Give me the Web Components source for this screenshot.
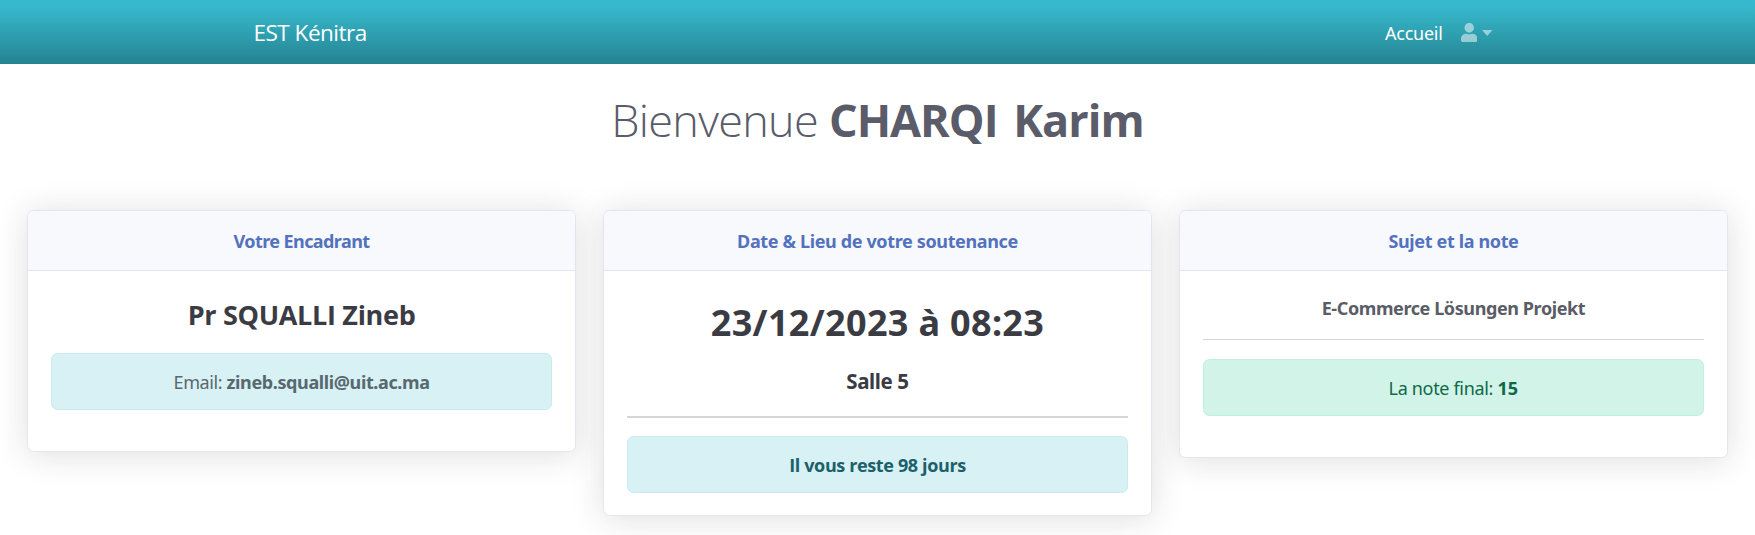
<!DOCTYPE html>
<html lang="fr">
<head>
<meta charset="utf-8">
<title>EST Kénitra</title>
<style>
html{height:100%}
body{margin:0;min-height:100%;background:#fff;font-family:"Open Sans","Noto Sans",sans-serif;font-size:18px;color:#5a5c69}
</style>
</head>
<body>
<student-home></student-home>
<script>
const define = (name, html) => {
  const t = document.createElement('template');
  t.innerHTML = html;
  customElements.define(name, class extends HTMLElement {
    constructor() {
      super();
      this.attachShadow({mode: 'open'}).append(t.content.cloneNode(true));
    }
  });
};

define('user-menu', `
<style>
:host{display:flex;align-items:center;color:rgba(255,255,255,.5)}
.user{width:16.5px;height:19px;margin-right:5px;fill:currentColor}
.caret{width:10.5px;height:6px;fill:currentColor}
</style>
<svg class="user" viewBox="0 0 448 512" preserveAspectRatio="none"><path d="M224 256c70.7 0 128-57.300 128-128S294.700 0 224 0 96 57.300 96 128s57.300 128 128 128zm89.600 32h-16.700c-22.200 10.200-46.900 16-72.900 16s-50.600-5.800-72.900-16h-16.700C60.200 288 0 348.200 0 422.400V464c0 26.500 21.500 48 48 48h352c26.500 0 48-21.500 48-48v-41.600c0-74.200-60.200-134.400-134.400-134.400z"/></svg>
<svg class="caret" viewBox="0 0 10 6" preserveAspectRatio="none"><path d="M0 0h10L5 6z"/></svg>`);

define('top-bar', `
<style>
:host{display:flex;align-items:center;justify-content:space-between;box-sizing:border-box;height:63.5px;padding:2px 262.500px 0 253.500px;background:linear-gradient(180deg,#36b9cc 10%,#258391 100%)}
.brand{font-size:22.6px;letter-spacing:-.54px;color:#fff}
nav{display:flex;align-items:center;gap:18px;font-family:"Noto Sans",sans-serif}
.link{letter-spacing:-.28px;color:#fff}
</style>
<span class="brand">EST Kénitra</span>
<nav><span class="link">Accueil</span><user-menu></user-menu></nav>`);

define('info-card', `
<style>
:host{display:block;box-sizing:border-box;background:#fff;border:1px solid #e3e6f0;border-radius:6.500px;box-shadow:0 2.760px 32.200px rgba(40,42,48,.15);text-align:center}
header{display:flex;align-items:center;justify-content:center;box-sizing:border-box;height:59.500px;padding-top:2px;background:#f8f9fc;border-bottom:1px solid #e3e6f0;border-radius:5.500px 5.500px 0 0;font:700 18px "Noto Sans",sans-serif;letter-spacing:var(--title-spacing,-.36px);color:#5272be}
section{padding:23px 23px 22.500px}
</style>
<header><slot name="title"></slot></header>
<section><slot></slot></section>`);

define('alert-box', `
<style>
:host{display:flex;align-items:center;justify-content:center;box-sizing:border-box;height:56.700px;padding-top:1.500px;border:1px solid #c7ebf1;border-radius:6.500px;background:#d7f1f5;color:#1c606a;white-space:pre}
:host([kind=success]){background:#d2f4e8;border-color:#bff0de;color:#0f6848}
</style>
<slot></slot>`);

define('rule-line', `<style>:host{display:block;height:1.400px;background:#d6d6d9}</style>`);

define('student-home', `
<style>
:host{display:block}
h1{margin:0;height:114px;padding-bottom:2px;line-height:112px;font-size:45px;font-weight:330;letter-spacing:-.7px;text-align:center;white-space:pre}
h1 b{letter-spacing:-1px;word-spacing:5px}
b{font-weight:700}
main{display:grid;grid-template-columns:repeat(3,1fr);align-items:start;gap:27.500px;padding:30.500px 27.300px 0}
h2,h4,p{margin:0;color:#3a3b43}
.name{font-size:27px;line-height:41px;letter-spacing:-.31px;margin-bottom:18.500px}
.date{font:700 36px/58px "Noto Sans",sans-serif;letter-spacing:.34px}
.room{font:700 20.500px/31px "Noto Sans",sans-serif;letter-spacing:-.39px;margin:14.500px 0 19.300px}
.subject{font:700 18px/29px "Noto Sans",sans-serif;letter-spacing:-.4px;color:#5a5c66;margin-bottom:16.600px}
rule-line{margin-bottom:18.400px}
.spaced{margin-bottom:18.400px}
.mail{color:#58686f;font-family:"Noto Sans",sans-serif;letter-spacing:-.38px}
.days{letter-spacing:-.37px}
.note{font-family:"Noto Sans",sans-serif;letter-spacing:-.33px}
.note b{letter-spacing:.2px}
.third .spaced{margin-bottom:19.200px}
</style>
<top-bar></top-bar>
<h1>Bienvenue <b>CHARQI Karim</b></h1>
<main>
<info-card style="--title-spacing:-.59px"><span slot="title">Votre Encadrant</span>
<h2 class="name">Pr SQUALLI Zineb</h2>
<alert-box class="spaced"><span class="mail">Email: <b>zineb.squalli@uit.ac.ma</b></span></alert-box></info-card>
<info-card><span slot="title">Date &amp; Lieu de votre soutenance</span>
<h2 class="date">23/12/2023 à 08:23</h2>
<h4 class="room">Salle 5</h4>
<rule-line></rule-line>
<alert-box><b class="days">Il vous reste 98 jours</b></alert-box></info-card>
<info-card class="third"><span slot="title">Sujet et la note</span>
<p class="subject">E-Commerce Lösungen Projekt</p>
<rule-line></rule-line>
<alert-box kind="success" class="spaced"><span class="note">La note final: <b>15</b></span></alert-box></info-card>
</main>`);
</script>
</body>
</html>
